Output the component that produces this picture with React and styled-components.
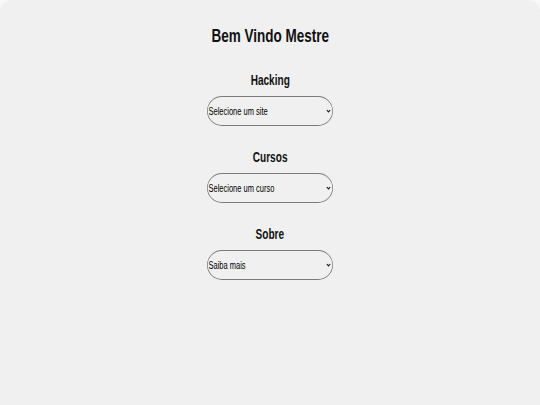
import React from "react";
import styled, { createGlobalStyle } from "styled-components";

const Global = createGlobalStyle`
  html, body {
    margin: 0;
    padding: 0;
    background: #f8f8f8;
    height: 100%;
  }
  #root { height: 100%; }
`;

const Page = styled.div`
  box-sizing: border-box;
  min-height: 405px;
  background: #f0f0f0;
  border-radius: 12px 12px 0 0;
  display: flex;
  flex-direction: column;
  align-items: center;
  padding-top: 25px;
  font-family: "Liberation Sans", Arial, sans-serif;
  color: #111;
`;

const Narrow = styled.span`
  display: inline-block;
  transform: scaleX(${(p) => p.$scale || 0.75});
  transform-origin: center;
  white-space: nowrap;
`;

const Title = styled.h1`
  margin: 0 0 24px;
  font-size: 18px;
  line-height: 22px;
  font-weight: bold;
`;

const Section = styled.section`
  display: flex;
  flex-direction: column;
  align-items: center;
  margin-bottom: 22px;
`;

const Heading = styled.h2`
  margin: 0 0 7px;
  font-size: 14px;
  line-height: 18px;
  font-weight: bold;
`;

const SelectWrap = styled.div`
  position: relative;
  width: 126px;
  height: 30px;
`;

const Select = styled.select`
  box-sizing: border-box;
  appearance: none;
  -webkit-appearance: none;
  width: 168px;
  height: 30px;
  margin: 0 0 0 -21px;
  transform: scaleX(0.75);
  transform-origin: center;
  padding: 0 0 0 1px;
  border: 1px solid #7a7a7a;
  border-radius: 20px / 15px;
  background: #f0f0f0;
  color: #000;
  font-family: "Liberation Sans", Arial, sans-serif;
  font-size: 10px;
  outline: none;
`;

const Chevron = styled.svg`
  position: absolute;
  right: 2px;
  top: 13px;
  width: 5px;
  height: 4px;
  pointer-events: none;
`;

const groups = [
  { title: "Hacking", placeholder: "Selecione um site" },
  { title: "Cursos", placeholder: "Selecione um curso" },
  { title: "Sobre", placeholder: "Saiba mais" },
];

export default function App() {
  return (
    <>
      <Global />
      <Page>
        <Title>
          <Narrow>Bem Vindo Mestre</Narrow>
        </Title>
        {groups.map((g) => (
          <Section key={g.title}>
            <Heading>
              <Narrow $scale={0.72}>{g.title}</Narrow>
            </Heading>
            <SelectWrap>
              <Select defaultValue="">
                <option value="">{g.placeholder}</option>
              </Select>
              <Chevron viewBox="0 0 5 4">
                <path d="M0.8 1 L2.5 2.9 L4.2 1" fill="none" stroke="#111" strokeWidth="1.1" />
              </Chevron>
            </SelectWrap>
          </Section>
        ))}
      </Page>
    </>
  );
}
